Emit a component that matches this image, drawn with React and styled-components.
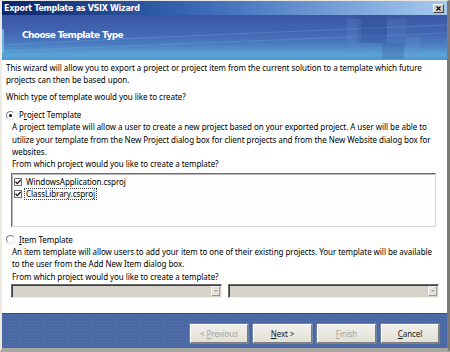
import React from "react";
import styled, { createGlobalStyle } from "styled-components";

const Global = createGlobalStyle`
  html, body { margin: 0; padding: 0; background: #d4d0c8; }
  body { font-family: "Noto Sans", "Open Sans", sans-serif; }
`;

const Window = styled.div`
  width: 450px;
  height: 352px;
  box-sizing: border-box;
  display: flex;
  flex-direction: column;
  background: #d4d0c8;
  border-left: 2px solid #eeeae2;
  border-right: 3px solid #7c7a76;
  border-bottom: 4px solid #a9a7a2;
  border-top: 1px solid #e8e6e0;
  overflow: hidden;
`;

const TitleBar = styled.div`
  height: 14px;
  flex: none;
  display: flex;
  align-items: center;
  justify-content: space-between;
  padding: 0 3px 0 2px;
  background: linear-gradient(90deg, #0a246a 0%, #3a6ab8 45%, #a6caf0 100%);
  color: #fff;
  font-family: "DejaVu Sans", sans-serif;
  font-weight: bold;
  font-size: 8px;
  letter-spacing: -0.3px;
`;

const CloseBtn = styled.div`
  width: 11px;
  height: 9px;
  box-sizing: border-box;
  background: #d4d0c8;
  border: 1px solid;
  border-color: #ffffff #404040 #404040 #ffffff;
  display: flex;
  align-items: center;
  justify-content: center;
`;

const Banner = styled.div`
  position: relative;
  height: 45px;
  flex: none;
  display: flex;
  align-items: center;
  padding-left: 20px;
  padding-bottom: 5px;
  box-sizing: border-box;
  background: linear-gradient(180deg, #3b57a4 0%, #4263b0 35%, #4a7cc0 65%, #5ba4da 88%, #5096d0 100%);
  overflow: hidden;
`;

const BannerArt = styled.svg`
  position: absolute;
  inset: 0;
  width: 100%;
  height: 100%;
  pointer-events: none;
`;

const BannerTitle = styled.div`
  position: relative;
  color: #ffffff;
  font-family: "DejaVu Sans", sans-serif;
  font-weight: bold;
  font-size: 9px;
  letter-spacing: -0.6px;
`;

const Content = styled.div`
  flex: 1;
  background: #ffffff;
  padding: 2px 6px 0 4px;
  font-size: 8px;
  line-height: 12.4px;
  color: #000;
  letter-spacing: -0.05px;
`;

const Para = styled.div`
  margin: ${(p) => p.$mt || 0}px 0 0 ${(p) => p.$indent || 0}px;
`;

const RadioRow = styled.div`
  display: flex;
  align-items: center;
  gap: 4px;
  margin-top: ${(p) => p.$mt || 0}px;
  height: 12px;
`;

const Radio = styled.span`
  width: 9px;
  height: 9px;
  box-sizing: border-box;
  border-radius: 50%;
  border: 1px solid #808080;
  border-right-color: #e0e0e0;
  border-bottom-color: #e0e0e0;
  background: #fff;
  display: inline-flex;
  align-items: center;
  justify-content: center;
  &::after {
    content: "";
    width: 3px;
    height: 3px;
    border-radius: 50%;
    background: ${(p) => (p.$on ? "#000" : "transparent")};
  }
`;

const U = styled.span`
  text-decoration: underline;
`;

const ListBox = styled.div`
  margin: 2px 5px 0 5px;
  height: 54px;
  box-sizing: border-box;
  border: 1px solid;
  border-color: #6f6f6f #d8d8d8 #d8d8d8 #6f6f6f;
  box-shadow: inset 1px 1px 0 #b8b8b8;
  background: #fcfdfc;
  padding: 2px 2px;
`;

const CheckItem = styled.div`
  display: flex;
  align-items: center;
  gap: 3px;
  height: 12px;
`;

const Check = styled.span`
  width: 8px;
  height: 8px;
  box-sizing: border-box;
  border: 1px solid #707070;
  background: #fff;
  display: inline-flex;
  align-items: center;
  justify-content: center;
`;

const ItemLabel = styled.span`
  padding: 0 1px;
  outline: ${(p) => (p.$focus ? "1px dotted #404040" : "none")};
  line-height: 10px;
`;

const ComboRow = styled.div`
  display: flex;
  gap: 6px;
  margin: 1px 0 0 5px;
`;

const Combo = styled.div`
  width: 211px;
  height: 14px;
  box-sizing: border-box;
  border: 1px solid;
  border-color: #6a6a6a #f0f0f0 #f0f0f0 #6a6a6a;
  box-shadow: inset 1px 1px 0 #404040;
  background: #d6d3cb;
  display: flex;
  justify-content: flex-end;
  padding: 1px 1px 1px 2px;
`;

const ComboArrow = styled.div`
  width: 9px;
  height: 10px;
  box-sizing: border-box;
  background: #e4e2dc;
  border: 1px solid;
  border-color: #f4f4f4 #9a9a9a #9a9a9a #f4f4f4;
  display: flex;
  align-items: center;
  justify-content: center;
  &::after {
    content: "";
    border-left: 2px solid transparent;
    border-right: 2px solid transparent;
    border-top: 2px solid #a0a0a0;
  }
`;

const Footer = styled.div`
  height: 35px;
  flex: none;
  box-sizing: border-box;
  border-top: 1px solid #39507e;
  background-color: #4a68a4;
  background-image: radial-gradient(circle, #5a78b2 0.6px, transparent 0.9px);
  background-size: 3px 3px;
  display: flex;
  justify-content: flex-end;
  align-items: flex-start;
  gap: 5px;
  padding: 10px 8px 0 0;
`;

const Button = styled.div`
  width: ${(p) => p.$w || 58}px;
  height: 19px;
  box-sizing: border-box;
  background: linear-gradient(180deg, #f1efea 0%, #e3e0d8 100%);
  border: 1px solid;
  border-color: #ffffff #7c7c78 #7c7c78 #ffffff;
  box-shadow: 0 0 0 0.5px #9aa0ac;
  display: flex;
  align-items: center;
  justify-content: center;
  white-space: pre;
  font-size: 8px;
  letter-spacing: -0.1px;
  color: ${(p) => (p.$disabled ? "#a3a29c" : "#1a1a1a")};
`;

const CheckMark = () => (
  <svg width="6" height="6" viewBox="0 0 6 6">
    <path d="M0.5 2.8 L2.3 4.6 L5.6 1" fill="none" stroke="#111" strokeWidth="1.3" />
  </svg>
);

export default function App() {
  return (
    <>
      <Global />
      <Window>
        <TitleBar>
          <span>Export Template as VSIX Wizard</span>
          <CloseBtn>
            <svg width="5" height="5" viewBox="0 0 5 5">
              <path d="M0.5 0.5 L4.5 4.5 M4.5 0.5 L0.5 4.5" stroke="#000" strokeWidth="1.1" />
            </svg>
          </CloseBtn>
        </TitleBar>
        <Banner>
          <BannerArt viewBox="0 0 445 45" preserveAspectRatio="none">
            <rect x="0" y="14" width="2" height="24" fill="#6fc2ea" opacity="0.8" />
            <path d="M0 30 Q150 22 445 10" stroke="#7fb0e8" strokeWidth="0.6" fill="none" opacity="0.5" />
            <path d="M0 36 Q200 28 445 18" stroke="#8cc0ee" strokeWidth="0.5" fill="none" opacity="0.4" />
            <rect x="355" y="0" width="30" height="28" fill="#2e4c96" opacity="0.35" />
            <rect x="345" y="4" width="14" height="30" fill="#5f86c8" opacity="0.25" />
            <rect x="380" y="28" width="22" height="16" fill="#3a5aa0" opacity="0.3" />
            <rect x="404" y="22" width="14" height="22" fill="#6c94d0" opacity="0.25" />
            <rect x="385" y="4" width="20" height="18" fill="#5d80c2" opacity="0.25" />
          </BannerArt>
          <BannerTitle>Choose Template Type</BannerTitle>
        </Banner>
        <Content>
          <Para>
            This wizard will allow you to export a project or project item from the current solution to a template which future projects can then be based upon.
          </Para>
          <Para $mt={4}>Which type of template would you like to create?</Para>
          <RadioRow $mt={6}>
            <Radio $on />
            <span>
              P<U>r</U>oject Template
            </span>
          </RadioRow>
          <Para $indent={6}>
            A project template will allow a user to create a new project based on your exported project. A user will be able to utilize your template from the New Project dialog box for client projects and from the New Website dialog box for websites.
          </Para>
          <Para $indent={6}>From which project would you like to create a template?</Para>
          <ListBox>
            <CheckItem>
              <Check>
                <CheckMark />
              </Check>
              <ItemLabel>WindowsApplication.csproj</ItemLabel>
            </CheckItem>
            <CheckItem>
              <Check>
                <CheckMark />
              </Check>
              <ItemLabel $focus>ClassLibrary.csproj</ItemLabel>
            </CheckItem>
          </ListBox>
          <RadioRow $mt={7}>
            <Radio />
            <span>
              <U>I</U>tem Template
            </span>
          </RadioRow>
          <Para $indent={6}>
            An item template will allow users to add your item to one of their existing projects. Your template will be available to the user from the Add New Item dialog box.
          </Para>
          <Para $indent={6}>From which project would you like to create a template?</Para>
          <ComboRow>
            <Combo>
              <ComboArrow />
            </Combo>
            <Combo>
              <ComboArrow />
            </Combo>
          </ComboRow>
        </Content>
        <Footer>
          <Button $disabled>
            {"< "}
            <U>P</U>revious
          </Button>
          <Button $w={59}>
            <U>N</U>ext{" >"}
          </Button>
          <Button $w={59} $disabled>
            <U>F</U>inish
          </Button>
          <Button $w={58}>
            <U>C</U>ancel
          </Button>
        </Footer>
      </Window>
    </>
  );
}
